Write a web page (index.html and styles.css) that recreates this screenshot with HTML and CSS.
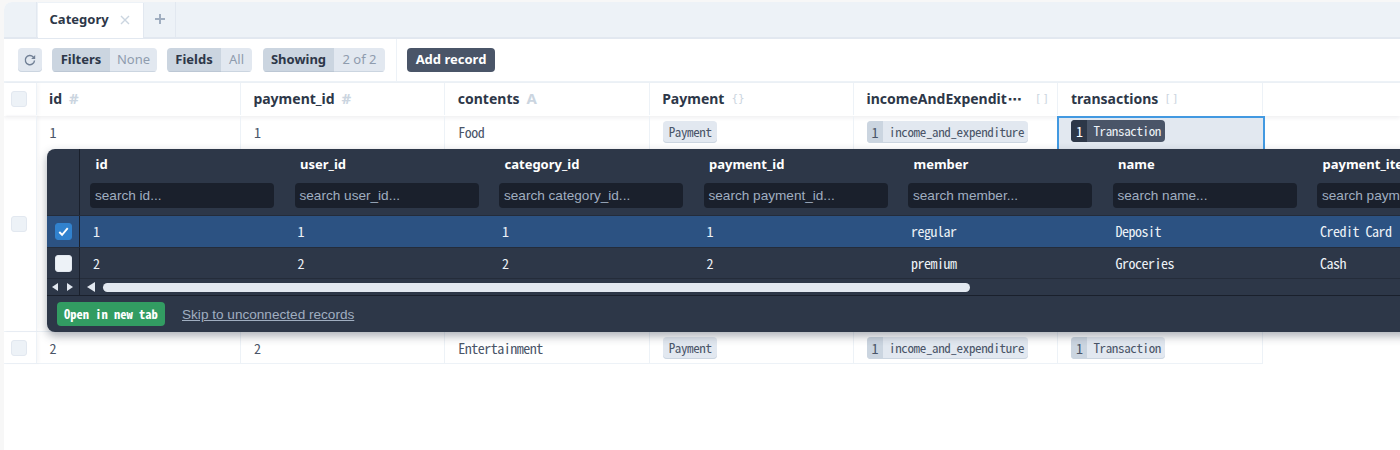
FILE: index.html
```html
<!DOCTYPE html>
<html lang="en">
<head>
<meta charset="utf-8">
<title>Category</title>
<link rel="stylesheet" href="styles.css">
</head>
<body>
<div class="app">
  <div class="tabbar">
    <div class="tab-spacer"></div>
    <div class="tab"><span class="tab-name">Category</span><svg class="tab-x" viewBox="0 0 10 10"><path d="M1 1l8 8M9 1l-8 8"/></svg></div>
    <div class="tab-add"><svg viewBox="0 0 10 10"><path d="M5 0v10M0 5h10"/></svg></div>
  </div>
  <div class="toolbar">
    <div class="tools">
      <button class="refresh"><svg viewBox="0 0 14 14"><path d="M11.5 7.5a4.6 4.6 0 1 1-1.3-3.6L11.6 5.2"/><path class="fill" d="M12.2 2v4h-4z"/></svg></button>
      <div class="pill filters"><span class="pill-k">Filters</span><span class="pill-v">None</span></div>
      <div class="pill fields"><span class="pill-k">Fields</span><span class="pill-v">All</span></div>
      <div class="pill showing"><span class="pill-k">Showing</span><span class="pill-v">2 of 2</span></div>
    </div>
    <div class="actions"><button class="add">Add record</button></div>
  </div>
  <div class="table">
    <div class="row head">
      <div class="sel"><span class="check"></span></div>
      <div class="th"><b>id</b><i class="ty">#</i></div>
      <div class="th"><b>payment_id</b><i class="ty">#</i></div>
      <div class="th"><b>contents</b><i class="ty">A</i></div>
      <div class="th"><b>Payment</b><i class="ty sm">{}</i></div>
      <div class="th"><b>incomeAndExpendit<span class="dots">⋯</span></b><i class="ty sm end">[]</i></div>
      <div class="th"><b>transactions</b><i class="ty sm br">[]</i></div>
    </div>
    <div class="row tall">
      <div class="sel mid"><span class="check"></span></div>
      <div class="td">1</div>
      <div class="td">1</div>
      <div class="td">Food</div>
      <div class="td"><span class="chip solo">Payment</span></div>
      <div class="td"><span class="chip"><em>1</em><span>income_and_expenditure</span></span></div>
      <div class="td active"><span class="chip dark"><em>1</em><span>Transaction</span></span></div>
    </div>
    <div class="row">
      <div class="sel"><span class="check"></span></div>
      <div class="td">2</div>
      <div class="td">2</div>
      <div class="td">Entertainment</div>
      <div class="td"><span class="chip solo">Payment</span></div>
      <div class="td"><span class="chip"><em>1</em><span>income_and_expenditure</span></span></div>
      <div class="td"><span class="chip"><em>1</em><span>Transaction</span></span></div>
    </div>
  </div>
  <div class="panel">
    <div class="p-row p-head">
      <div class="p-sel"></div>
      <div class="p-th"><b>id</b><span class="search">search id...</span></div>
      <div class="p-th"><b>user_id</b><span class="search">search user_id...</span></div>
      <div class="p-th"><b>category_id</b><span class="search">search category_id...</span></div>
      <div class="p-th"><b>payment_id</b><span class="search">search payment_id...</span></div>
      <div class="p-th"><b>member</b><span class="search">search member...</span></div>
      <div class="p-th"><b>name</b><span class="search">search name...</span></div>
      <div class="p-th"><b>payment_item</b><span class="search">search payment_item...</span></div>
    </div>
    <div class="p-row p-data on">
      <div class="p-sel"><span class="check checked"><svg viewBox="0 0 16 16"><path d="M3.5 8.5l3 3 6-7"/></svg></span></div>
      <div class="p-td">1</div><div class="p-td">1</div><div class="p-td">1</div><div class="p-td">1</div>
      <div class="p-td">regular</div><div class="p-td">Deposit</div><div class="p-td">Credit Card</div>
    </div>
    <div class="p-row p-data second">
      <div class="p-sel"><span class="check"></span></div>
      <div class="p-td">2</div><div class="p-td">2</div><div class="p-td">2</div><div class="p-td">2</div>
      <div class="p-td">premium</div><div class="p-td">Groceries</div><div class="p-td">Cash</div>
    </div>
    <div class="p-scroll">
      <div class="p-arrows"><i class="tri left"></i><i class="tri right"></i></div>
      <div class="p-track"><i class="tri big"></i><i class="thumb"></i></div>
    </div>
    <div class="p-foot">
      <button class="open">Open in new tab</button>
      <a class="skip" href="#">Skip to unconnected records</a>
    </div>
  </div>
</div>
</body>
</html>
```
FILE: styles.css
```css
* { box-sizing: border-box; }
html, body { margin: 0; height: 100%; overflow: hidden; }
body {
  background: #f7f7f7;
  padding: 2px 0 0 4px;
  font-family: "Noto Sans", "Noto Sans CJK JP", sans-serif;
  color: #2d3748;
}
.app {
  position: relative;
  width: 1396px;
  height: 448px;
  background: #fff;
  border-radius: 8px 0 0 0;
  overflow: hidden;
}

/* tabs */
.tabbar { display: flex; height: 37px; background: #edf2f7; border-bottom: 2px solid #e2e8f0; }
.tab-spacer { width: 33px; border-right: 1px solid #e2e8f0; margin-right: 1px; }
.tab { width: 105px; height: 35px; margin-top: 1px; background: #fff; display: flex; align-items: center; padding: 0 0 3px 11.5px; box-shadow: 1px 0 0 #e2e8f0; }
.tab-name { font-size: 13px; font-weight: 700; color: #2d3748; width: 70px; }
.tab-x { width: 10px; height: 10px; fill: none; stroke: #cbd5e0; stroke-width: 1.4; margin-top: 2px; }
.tab-add { width: 33px; display: flex; align-items: center; justify-content: center; padding: 0 0 2px 1px; border-right: 1px solid #e2e8f0; }
.tab-add svg { width: 10px; height: 10px; fill: none; stroke: #a0aec0; stroke-width: 2; }

/* toolbar */
.toolbar { display: flex; height: 44px; border-bottom: 2px solid #edf2f7; }
.tools { display: flex; align-items: center; flex: none; width: 393px; padding: 0 0 0 14px; border-right: 1px solid #edf2f7; }
.refresh { flex: none; width: 24px; height: 24px; padding: 0; border: 0; border-radius: 4px; background: #e2e8f0; box-shadow: inset 0 -1px 0 #cbd5e0; display: flex; align-items: center; justify-content: center; margin-right: 10px; }
.refresh svg { width: 14px; height: 14px; fill: none; stroke: #718096; stroke-width: 1.4; }
.refresh .fill { fill: #718096; stroke: none; }
.pill { display: grid; flex: none; height: 24px; border-radius: 4px; overflow: hidden; font-size: 13px; line-height: 22px; text-align: center; margin-right: 10px; white-space: nowrap; }
.pill.filters { grid-template-columns: 58px 47px; }
.pill.fields { grid-template-columns: 54px 31px; margin-right: 11px; }
.pill.showing { grid-template-columns: 71px 51px; margin-right: 0; }
.pill-k { background: #cbd5e0; font-weight: 700; color: #2d3748; box-shadow: inset 0 -1px 0 #bcc7d4; }
.pill-v { background: #e2e8f0; color: #8f9cae; box-shadow: inset 0 -1px 0 #cbd5e0; }
.actions { display: flex; align-items: center; padding-left: 10px; }
.add { height: 24px; width: 88px; padding: 0 0 2px; border: 0; border-radius: 4px; background: #4a5568; color: #fff; font: 700 13px "Noto Sans", sans-serif; }

/* table */
.row { display: grid; grid-template-columns: 32.5px repeat(6, 204.4px); height: 32px; width: 1259px; border-bottom: 1px solid #edf2f7; }
.row.head { height: 33px; width: 100%; border-bottom: 0; box-shadow: 0 2px 4px rgba(45,55,72,.08); }
.row.tall { height: 216px; }
.sel { display: flex; align-items: center; justify-content: center; border-right: 1px solid #edf2f7; box-shadow: 2px 0 3px rgba(45,55,72,.04); padding-right: 1px; }
.head .sel { height: 32px; }
.check { display: block; width: 16px; height: 16px; border-radius: 3px; background: #edf2f7; border: 1px solid #e2e8f0; }
.th { display: flex; align-items: center; padding: 0 0 2px 12.5px; border-right: 1px solid #edf2f7; font-size: 14px; height: 32px; white-space: nowrap; }
.th b { font-weight: 700; color: #2d3748; }
.dots { font-family: "DejaVu Sans", sans-serif; font-size: 14px; margin-left: 1px; }
.ty { font-style: normal; font-weight: 700; color: #cbd5e0; margin-left: 7px; font-size: 15px; font-family: "Noto Sans", sans-serif; }
.ty.sm { font-size: 11px; font-weight: 400; margin-left: 7px; font-family: "DejaVu Sans Mono", monospace; }
.ty.sm.br { margin-left: 6px; letter-spacing: 1px; }
.ty.sm.end { margin-left: 13px; letter-spacing: 1px; }
.td { padding: 6px 0 0 13px; border-right: 1px solid #edf2f7; font: 14px/20px "Noto Sans Mono CJK JP", "DejaVu Sans Mono", monospace; letter-spacing: -.5px; color: #4a5568; }
.td.active { background: #e2e8f0; outline: 2px solid #4299e1; outline-offset: -2px; padding: 5px 0 0 14px; border-right: 0; margin: 0 -2px 0 -1px; }
.chip { display: inline-flex; height: 22px; margin-top: -1px; border-radius: 4px; overflow: hidden; background: #e2e8f0; box-shadow: inset 0 -1px 0 #cbd5e0; font-size: 13px; letter-spacing: -.36px; line-height: 22px; vertical-align: top; white-space: nowrap; }
.chip em { font-style: normal; font-size: 14px; letter-spacing: 0; flex: none; width: 16px; text-align: center; background: #cbd5e0; }
.chip span { padding: 0 4px 0 6px; }
.chip.solo { padding: 0 5px 0 6px; }
.chip.dark { background: #4a5568; color: #edf2f7; box-shadow: none; }
.chip.dark em { background: #2d3748; color: #fff; }

/* overlay panel */
.panel {
  position: absolute;
  left: 43px;
  top: 147px;
  width: 1460px;
  height: 183px;
  background: #2d3748;
  border-radius: 8px;
  box-shadow: 0 4px 10px rgba(45,55,72,.4);
  overflow: hidden;
}
.p-row { display: grid; grid-template-columns: 33px repeat(7, 204.5px); }
.p-head { height: 67px; border-bottom: 1px solid #242c3a; }
.p-sel { display: flex; align-items: center; justify-content: center; border-right: 1px solid #1a202c; }
.p-th { padding: 7px 0 0 10px; color: #fff; font-size: 13px; display: flex; flex-direction: column; }
.p-th b { padding-left: 5.5px; line-height: 16px; font-weight: 700; }
.search { margin-top: 11px; width: 184px; height: 25px; border-radius: 4px; background: #1a202c; color: #a0aec0; font: 13.6px/25px "Liberation Sans", sans-serif; padding-left: 5px; white-space: nowrap; overflow: hidden; }
.p-data { height: 32px; border-bottom: 1px solid #242c3a; }
.p-data.second { height: 31px; }
.p-data.on { background: #2c5282; }
.p-td { padding-left: 13px; font: 14px/31px "Noto Sans Mono CJK JP", "DejaVu Sans Mono", monospace; letter-spacing: -.5px; color: #edf2f7; }
.p-data .check { width: 17px; height: 17px; background: #edf2f7; }
.p-data .check.checked { background: #3182ce; border-color: #3182ce; }
.check.checked svg { display: block; width: 15px; height: 15px; fill: none; stroke: #fff; stroke-width: 2; }
.p-scroll { display: flex; height: 17px; border-bottom: 1px solid #1a202c; }
.p-arrows { width: 33px; display: flex; align-items: center; justify-content: space-between; padding: 0 6px 0 5px; border-right: 1px solid #1a202c; }
.p-track { flex: 1; display: flex; align-items: center; padding-left: 7px; }
.tri { display: block; width: 0; height: 0; border-style: solid; border-color: transparent; }
.tri.left { border-width: 4px 6px 4px 0; border-right-color: #e2e8f0; }
.tri.right { border-width: 4px 0 4px 6px; border-left-color: #e2e8f0; }
.tri.big { border-width: 5px 8px 5px 0; border-right-color: #e2e8f0; margin-right: 8px; }
.thumb { display: block; width: 867px; height: 9px; border-radius: 5px; background: #e2e8f0; }
.p-foot { display: flex; align-items: center; padding: 0 0 0 10px; height: 36px; }
.open { width: 108px; height: 24px; padding: 0 0 2px; border: 0; border-radius: 4px; background: #329c62; color: #fff; font: 700 12.5px "Noto Sans Mono CJK JP", "DejaVu Sans Mono", monospace; }
.skip { margin-left: 17px; color: #a0aec0; font: 13.6px "Liberation Sans", sans-serif; }
```
